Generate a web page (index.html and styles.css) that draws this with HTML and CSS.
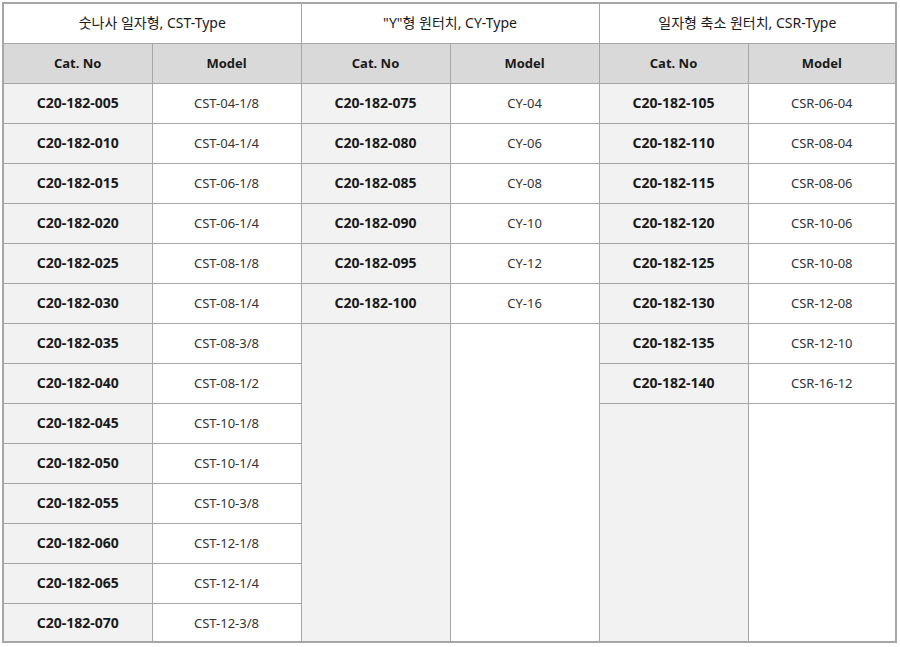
FILE: index.html
```html
<!DOCTYPE html>
<html lang="ko">
<head>
<meta charset="utf-8">
<link rel="stylesheet" href="styles.css">
</head>
<body>
<div class="frame">
<table class="spec">
<colgroup>
<col class="c-first"><col class="c"><col class="c"><col class="c"><col class="c"><col class="c-last">
</colgroup>
<tr class="group">
<th colspan="2">숫나사 일자형, CST-Type</th>
<th colspan="2">"Y"형 원터치, CY-Type</th>
<th colspan="2">일자형 축소 원터치, CSR-Type</th>
</tr>
<tr class="head">
<th>Cat. No</th><th>Model</th><th>Cat. No</th><th>Model</th><th>Cat. No</th><th>Model</th>
</tr>
<tr><td class="cat">C20-182-005</td><td class="model">CST-04-1/8</td><td class="cat">C20-182-075</td><td class="model">CY-04</td><td class="cat">C20-182-105</td><td class="model">CSR-06-04</td></tr>
<tr><td class="cat">C20-182-010</td><td class="model">CST-04-1/4</td><td class="cat">C20-182-080</td><td class="model">CY-06</td><td class="cat">C20-182-110</td><td class="model">CSR-08-04</td></tr>
<tr><td class="cat">C20-182-015</td><td class="model">CST-06-1/8</td><td class="cat">C20-182-085</td><td class="model">CY-08</td><td class="cat">C20-182-115</td><td class="model">CSR-08-06</td></tr>
<tr><td class="cat">C20-182-020</td><td class="model">CST-06-1/4</td><td class="cat">C20-182-090</td><td class="model">CY-10</td><td class="cat">C20-182-120</td><td class="model">CSR-10-06</td></tr>
<tr><td class="cat">C20-182-025</td><td class="model">CST-08-1/8</td><td class="cat">C20-182-095</td><td class="model">CY-12</td><td class="cat">C20-182-125</td><td class="model">CSR-10-08</td></tr>
<tr><td class="cat">C20-182-030</td><td class="model">CST-08-1/4</td><td class="cat">C20-182-100</td><td class="model">CY-16</td><td class="cat">C20-182-130</td><td class="model">CSR-12-08</td></tr>
<tr><td class="cat">C20-182-035</td><td class="model">CST-08-3/8</td><td class="cat" rowspan="8"></td><td class="model" rowspan="8"></td><td class="cat">C20-182-135</td><td class="model">CSR-12-10</td></tr>
<tr><td class="cat">C20-182-040</td><td class="model">CST-08-1/2</td><td class="cat">C20-182-140</td><td class="model">CSR-16-12</td></tr>
<tr><td class="cat">C20-182-045</td><td class="model">CST-10-1/8</td><td class="cat" rowspan="6"></td><td class="model" rowspan="6"></td></tr>
<tr><td class="cat">C20-182-050</td><td class="model">CST-10-1/4</td></tr>
<tr><td class="cat">C20-182-055</td><td class="model">CST-10-3/8</td></tr>
<tr><td class="cat">C20-182-060</td><td class="model">CST-12-1/8</td></tr>
<tr><td class="cat">C20-182-065</td><td class="model">CST-12-1/4</td></tr>
<tr><td class="cat">C20-182-070</td><td class="model">CST-12-3/8</td></tr>
</table>
</div>
</body>
</html>
```
FILE: styles.css
```css
html, body {
  margin: 0;
  padding: 0;
  background: #ffffff;
}
body {
  font-family: "Noto Sans", "Noto Sans CJK KR", sans-serif;
  font-size: 13px;
  color: #222222;
}
.frame {
  margin: 2px;
  width: 891px;
  height: 637px;
  border: 2px solid #a6a6a6;
  overflow: hidden;
}
.spec {
  border-collapse: collapse;
  border-style: hidden;
  table-layout: fixed;
  width: 891px;
}
.spec tr {
  height: 40px;
}
.spec tr.group {
  height: 39px;
}
.c-first { width: 148px; }
.c { width: 149px; }
.c-last { width: 147px; }
.spec th, .spec td {
  border: 1px solid #a6a6a6;
  padding: 0;
  text-align: center;
  vertical-align: middle;
  line-height: 18px;
}
.group th {
  font-weight: 400;
  font-size: 14px;
  color: #1a1a1a;
  background: #ffffff;
}
.head th {
  font-weight: 700;
  background: #d9d9d9;
  color: #1a1a1a;
}
.cat {
  background: #f2f2f2;
  font-weight: 700;
  font-size: 14px;
  color: #1a1a1a;
}
.model {
  background: #ffffff;
  color: #333333;
}
```
